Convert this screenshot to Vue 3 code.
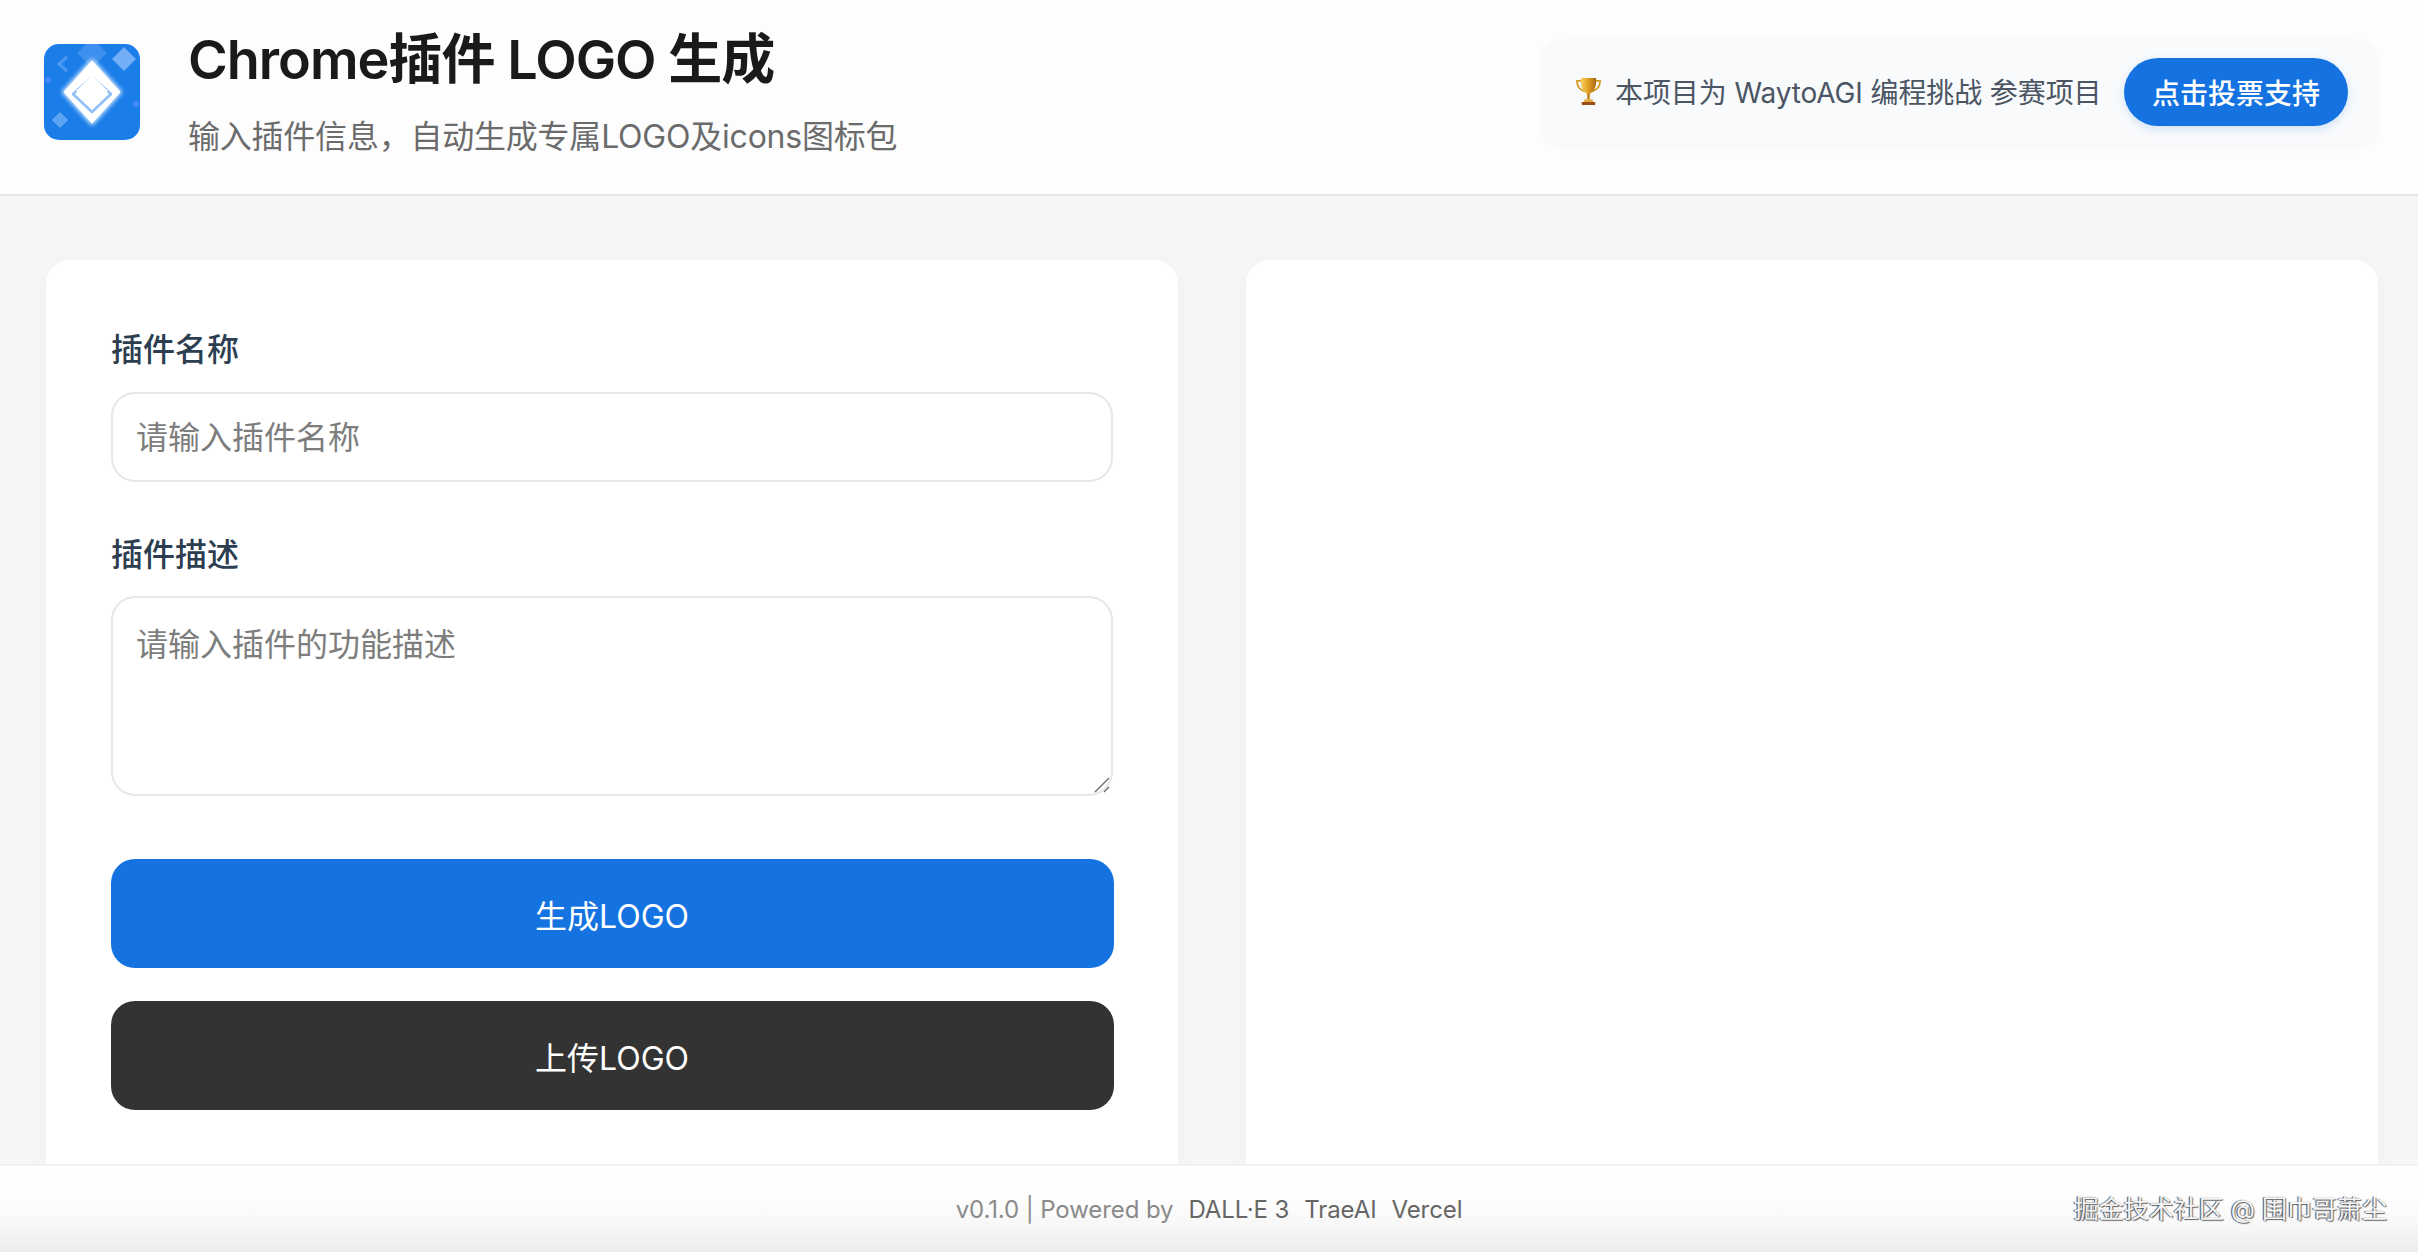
<script setup>
const links = ['DALL·E 3', 'TraeAI', 'Vercel']
</script>

<template>
  <div class="page">
    <header class="header">
      <div class="brand">
        <svg class="logo" viewBox="0 0 96 96" aria-hidden="true">
          <defs>
            <filter id="glow" x="-30%" y="-30%" width="160%" height="160%">
              <feGaussianBlur stdDeviation="2" />
            </filter>
            <filter id="soft" x="-20%" y="-20%" width="140%" height="140%">
              <feGaussianBlur stdDeviation="0.5" />
            </filter>
            <clipPath id="tile"><rect width="96" height="96" rx="15" /></clipPath>
            <linearGradient id="gold" x1="0" x2="1" y1="0" y2="0">
              <stop offset="0" stop-color="#f7d365" />
              <stop offset=".45" stop-color="#e3a322" />
              <stop offset="1" stop-color="#a9660f" />
            </linearGradient>
          </defs>
          <rect width="96" height="96" rx="15" fill="#1a7de8" />
          <g filter="url(#soft)" clip-path="url(#tile)">
            <path d="M48 -6 L63 9 L48 24 L33 9 Z" fill="#3d8eef" />
            <path d="M80 3 L92 15 L80 27 L68 15 Z" fill="#72aef5" />
            <path d="M23 13 L15 20 L23 27" fill="none" stroke="#4a97f0" stroke-width="3" />
            <path d="M16 68 L24 76 L16 84 L8 76 Z" fill="#5da4f2" />
            <circle cx="4" cy="36" r="3" fill="#3d8eef" />
            <path d="M92 56 L96 60 L92 64 L88 60 Z" fill="#3d8eef" />
          </g>
          <path d="M48 17 L76 48 L48 79 L20 48 Z" fill="#fff" stroke="#d8eaff" stroke-width="4" stroke-linejoin="round" filter="url(#glow)" />
          <path d="M48 17 L76 48 L48 79 L20 48 Z" fill="#fff" stroke="#fff" stroke-width="1" stroke-linejoin="round" />
          <path d="M48 33 L67 50 L48 68 L29 50 Z" fill="none" stroke="#8fc0f7" stroke-width="2.5" stroke-linejoin="round" />
          <path d="M48 31 L64 47 L48 63 L32 47 Z" fill="#fff" />
        </svg>
        <div class="titles">
          <h1 class="title">Chrome插件 LOGO 生成</h1>
          <p class="subtitle">输入插件信息，自动生成专属LOGO及icons图标包</p>
        </div>
      </div>
      <div class="promo">
        <svg class="trophy" viewBox="0 0 28 30" aria-hidden="true">
          <path d="M7 4 H2 C2 10 5 13 10 15 M21 4 H26 C26 10 23 13 18 15" fill="none" stroke="#d49a22" stroke-width="1.8" />
          <path d="M6 1 H22 C22 10 21 15 14 18 C7 15 6 10 6 1 Z" fill="url(#gold)" />
          <rect x="12.7" y="17" width="2.6" height="6" fill="#c07f16" />
          <path d="M10 23 H18 L19 26 H9 Z" fill="#e2a83a" />
          <rect x="7" y="26" width="14" height="3" rx=".5" fill="#9a4f18" />
        </svg>
        <span class="promo-text">本项目为 WaytoAGI 编程挑战 参赛项目</span>
        <button class="vote" type="button">点击投票支持</button>
      </div>
    </header>

    <main class="main">
      <section class="card form">
        <div class="field">
          <label class="label">插件名称</label>
          <input class="control input" type="text" placeholder="请输入插件名称" />
        </div>
        <div class="field">
          <label class="label">插件描述</label>
          <div class="area-wrap">
            <textarea class="control area" placeholder="请输入插件的功能描述"></textarea>
            <svg class="grip" viewBox="0 0 16 16" aria-hidden="true">
              <path d="M1 15 L15 1 M10 15 L15 10" fill="none" stroke="#666" stroke-width="1.3" />
            </svg>
          </div>
        </div>
        <button class="action primary" type="button">生成LOGO</button>
        <button class="action dark" type="button">上传LOGO</button>
      </section>
      <section class="card"></section>
    </main>

    <footer class="footer">
      <div class="credits">
        <span class="version">v0.1.0 | Powered by</span>
        <span v-for="l in links" :key="l" class="link">{{ l }}</span>
      </div>
      <span class="mark">掘金技术社区 @ 围巾哥萧尘</span>
    </footer>
  </div>
</template>

<style>
html, body { margin: 0; background: #f5f6f8; overflow: hidden; }
</style>

<style scoped>
.page {
  position: relative;
  width: 2418px;
  height: 1252px;
  overflow: hidden;
  background: #f5f6f8;
  font-family: Inter, "Noto Sans CJK SC", sans-serif;
}
.header {
  box-sizing: border-box;
  height: 196px;
  padding: 0 41px 0 44px;
  display: flex;
  align-items: center;
  justify-content: space-between;
  background: #fdfdfe;
  border-bottom: 2px solid #e5e7eb;
}
.brand { display: flex; align-items: flex-start; gap: 48px; align-self: flex-start; margin-top: 44px; }
.logo { width: 96px; height: 96px; flex: none; }
.titles { display: flex; flex-direction: column; gap: 23px; margin-top: -16px; }
.title { margin: 0; font-size: 54px; line-height: 64px; font-weight: 600; letter-spacing: -1px; color: #1a1a1a; }
.subtitle { margin: 0; font-size: 32px; line-height: 44px; letter-spacing: -0.22px; color: #6b6b6b; }
.promo {
  box-sizing: border-box;
  width: 836px;
  height: 108px;
  margin-bottom: 8px;
  padding: 0 29px 0 34px;
  display: flex;
  align-items: center;
  background: #f8fafc;
  border-radius: 20px;
  box-shadow: 0 2px 8px rgba(0, 0, 0, .02);
}
.trophy { width: 27px; height: 29px; margin: 0 13px 4px 0; flex: none; }
.promo-text { font-size: 28px; letter-spacing: -0.1px; color: #4b5563; white-space: nowrap; margin-bottom: 4px; }
.vote {
  margin-left: auto;
  margin-bottom: 2px;
  width: 224px;
  height: 68px;
  padding: 0;
  border: 0;
  border-radius: 34px;
  background: #1473e0;
  color: #fff;
  font: 500 28px Inter, "Noto Sans CJK SC", sans-serif;
  box-shadow: 0 3px 8px rgba(20, 115, 224, .18);
}
.main {
  display: grid;
  grid-template-columns: 1132px 1132px;
  gap: 68px;
  padding: 64px 40px 0 46px;
}
.card {
  height: 1000px;
  background: #fff;
  border-radius: 24px;
  box-shadow: 0 4px 20px rgba(0, 0, 0, .03);
}
.form { box-sizing: border-box; padding: 68px 65px; display: flex; flex-direction: column; }
.field { display: flex; flex-direction: column; }
.label { font-size: 32px; line-height: 44px; font-weight: 500; color: #2c3e50; margin-bottom: 20px; }
.control {
  box-sizing: border-box;
  width: 1002px;
  border: 2px solid #e5e7eb;
  border-radius: 24px;
  padding: 0 23px;
  font: 32px Inter, "Noto Sans CJK SC", sans-serif;
  color: #1a1a1a;
  background: #fff;
  outline: none;
}
.control::placeholder { color: #7d7d7d; opacity: 1; }
.input { height: 90px; margin-bottom: 51px; }
.area-wrap { position: relative; width: 1002px; margin: -1px 0 63px; }
.area { height: 200px; padding-top: 25px; line-height: 44px; resize: none; display: block; }
.grip { position: absolute; right: 3px; bottom: 3px; width: 16px; height: 16px; }
.action {
  width: 1003px;
  height: 109px;
  flex: none;
  margin-left: -0.5px;
  border: 0;
  border-radius: 24px;
  color: #fff;
  font: 32px Inter, "Noto Sans CJK SC", sans-serif;
  padding: 0;
}
.primary { background: #1473e0; margin-bottom: 33px; }
.dark { background: #333; }
.footer {
  position: absolute;
  left: 0;
  right: 0;
  bottom: 0;
  box-sizing: border-box;
  height: 88px;
  border-top: 2px solid #f0f1f3;
  background: linear-gradient(180deg, #ffffff 0%, #fdfdfd 45%, #f7f7f7 70%, #ececec 100%);
  display: flex;
  align-items: center;
  justify-content: center;
}
.credits { display: flex; gap: 15px; font-size: 24px; letter-spacing: -0.1px; align-items: center; }
.version { color: #8a8a8a; }
.link { color: #666; }
.mark {
  position: absolute;
  right: 31px;
  top: 30px;
  font-size: 25px;
  line-height: 26px;
  color: #f5f5f5;
  text-shadow: -1px 0 1px #444, 1px 1px 1px #666;
}
</style>
